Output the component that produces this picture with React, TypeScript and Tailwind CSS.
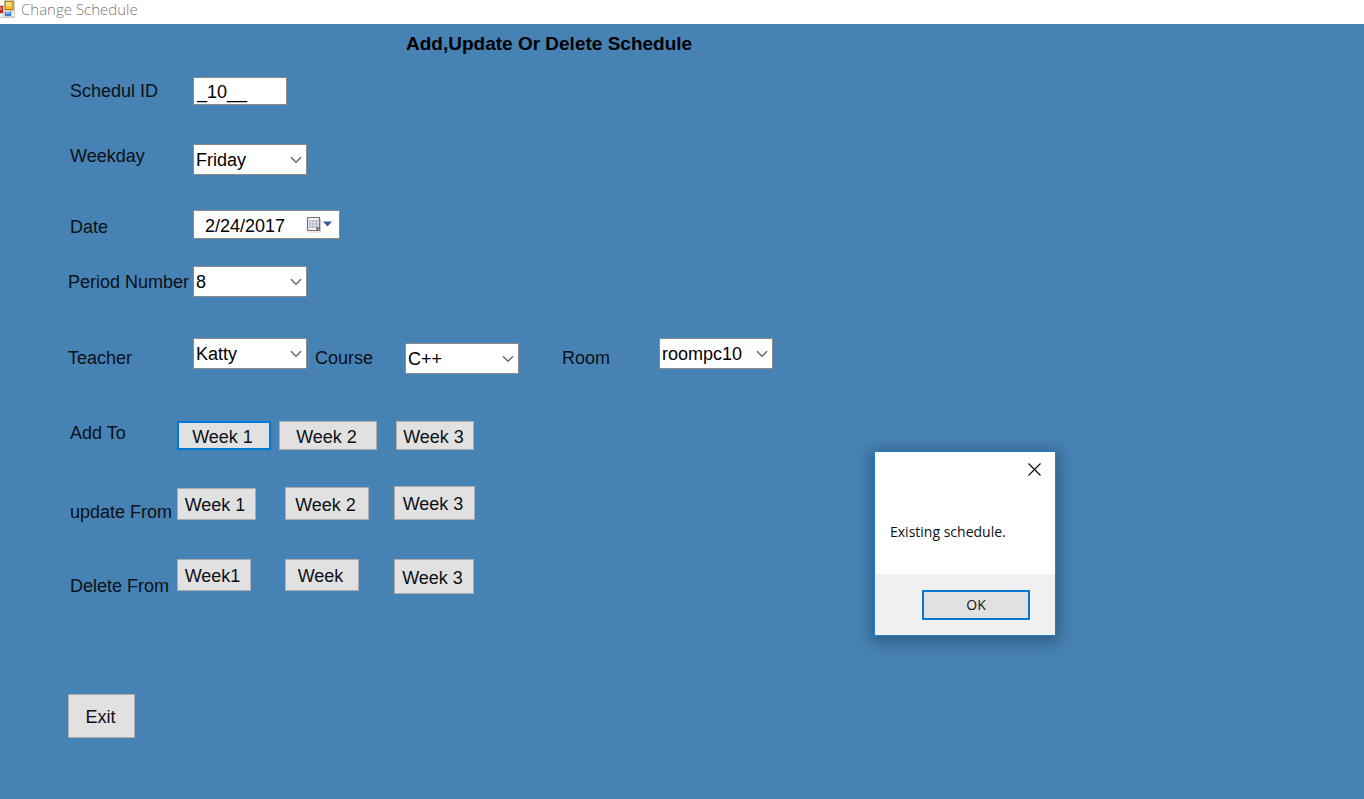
import type { ReactNode } from "react";

type ComboProps = { id: string; options: string[]; className?: string };

function Combo({ id, options, className = "" }: ComboProps) {
  return (
    <div className={`relative h-[31px] w-[114px] shrink-0 ${className}`}>
      <select
        id={id}
        defaultValue={options[0]}
        className="block h-full w-full appearance-none border border-[#8a8a8a] bg-white pl-[2px] text-[18px] leading-6 text-black outline-none"
      >
        {options.map((o) => (
          <option key={o}>{o}</option>
        ))}
      </select>
      <svg
        viewBox="0 0 12 8"
        className="pointer-events-none absolute top-3 right-[5px] h-2 w-3"
        fill="none"
        stroke="#6a6a6a"
        strokeWidth="1.5"
      >
        <path d="M1 1.2 L6 6.2 L11 1.2" />
      </svg>
    </div>
  );
}

function FieldLabel({ htmlFor, className, children }: { htmlFor: string; className: string; children: ReactNode }) {
  return (
    <label htmlFor={htmlFor} className={`shrink-0 whitespace-nowrap ${className}`}>
      {children}
    </label>
  );
}

function WeekButton({ label, className, primary = false }: { label: string; className: string; primary?: boolean }) {
  return (
    <button
      type="button"
      className={`shrink-0 bg-[#e1e1e1] pt-0.5 pr-[3px] whitespace-nowrap ${
        primary ? "border-2 border-[#0078d7]" : "border border-[#adadad]"
      } ${className}`}
    >
      {label}
    </button>
  );
}

function AppIcon() {
  return (
    <svg viewBox="0 0 15 18" className="h-[18px] w-[15px] shrink-0" aria-hidden="true">
      <path d="M4 0h11v18H0V5h4z" fill="#d0d0d0" />
      <rect x="0" y="6" width="3" height="7" fill="#b3261e" />
      <rect x="0" y="7" width="2" height="3" fill="#e0736b" />
      <rect x="5" y="1.500" width="8" height="8" fill="#f5c033" stroke="#b07c10" />
      <rect x="6" y="2" width="5" height="4" fill="#fddd78" />
      <rect x="0" y="14" width="3" height="3" fill="#f2f2f2" />
      <rect x="5" y="12" width="6" height="4" fill="#3f78d8" />
      <rect x="6" y="12" width="4" height="2" fill="#7fb0f5" />
      <rect x="12" y="12" width="2" height="4" fill="#f2f2f2" />
    </svg>
  );
}

function CalendarIcon() {
  return (
    <svg viewBox="0 0 26 17" className="h-[17px] w-[26px]" aria-hidden="true">
      <path d="M2 16h12.500V3" fill="none" stroke="#d5d0d0" />
      <path d="M1.500 1.500h12v13h-12z" fill="#eef0f5" stroke="#7b7070" strokeWidth="1.200" />
      <rect x="3" y="4" width="9" height="8" fill="#b3bccb" />
      <path d="M3 6.500h9M3 9.500h9M5.500 4v8M8.500 4v8" stroke="#dde2ea" strokeWidth="0.800" />
      <path d="M10.500 15v-3.500h3.500z" fill="#5d5555" />
      <path d="M17 5.500h9l-4.500 5z" fill="#3b5a95" />
    </svg>
  );
}

function MessageDialog() {
  return (
    <div
      role="dialog"
      aria-label="Existing schedule."
      className="absolute top-[451px] left-[874px] flex w-[182px] flex-col border border-[#1a80d8] bg-white font-['Open_Sans',sans-serif] text-[14px] leading-5 shadow-[0_3px_14px_3px_rgba(0,0,0,0.3)]"
    >
      <button type="button" aria-label="Close" className="mt-[10px] mr-[13px] self-end p-px">
        <svg viewBox="0 0 13 13" className="size-[13px]" stroke="#000" strokeWidth="1.1">
          <path d="M0.500 0.500 L12.500 12.500 M12.500 0.500 L0.500 12.500" />
        </svg>
      </button>
      <p className="mt-[45px] mb-8 pl-[15px]">Existing schedule.</p>
      <div className="flex justify-end bg-[#f0f0f0] pt-4 pr-[25px] pb-[15px]">
        <button type="button" className="h-[30px] w-[108px] border-2 border-[#0078d7] bg-[#e1e1e1]">
          OK
        </button>
      </div>
    </div>
  );
}

export default function App() {
  return (
    <div className="relative flex min-h-screen flex-col bg-[#4682b4] font-['Liberation_Sans',sans-serif] text-[18px] leading-6 text-[#0b1116]">
      <header className="flex h-6 items-start bg-white">
        <AppIcon />
        <span className="pl-[6px] font-['Open_Sans',sans-serif] text-[15px] leading-[18px] font-light text-[#777]">
          Change Schedule
        </span>
      </header>

      <main className="flex flex-col pt-2 pl-[70px]">
        <h1 className="pl-[336px] text-[19px] leading-6 font-bold text-black">
          Add,Update Or Delete Schedule
        </h1>

        <div className="mt-[21px] flex items-center">
          <FieldLabel htmlFor="schedule-id" className="w-[123px]">Schedul ID</FieldLabel>
          <input
            id="schedule-id"
            defaultValue="_10__"
            className="h-7 w-[94px] border border-[#8a8a8a] bg-white pt-0.5 pl-[3px] text-black outline-none"
          />
        </div>

        <div className="mt-[39px] flex items-start">
          <FieldLabel htmlFor="weekday" className="w-[123px]">Weekday</FieldLabel>
          <Combo id="weekday" options={["Friday"]} />
        </div>

        <div className="mt-[35px] flex items-end">
          <FieldLabel htmlFor="date" className="w-[123px]">Date</FieldLabel>
          <div className="flex h-[29px] w-[147px] items-center border border-[#8a8a8a] bg-white pr-[7px]">
            <input
              id="date"
              defaultValue="2/24/2017"
              className="w-full min-w-0 flex-1 bg-transparent pt-0.5 pl-[11px] text-black outline-none"
            />
            <button type="button" aria-label="Open calendar" className="shrink-0">
              <CalendarIcon />
            </button>
          </div>
        </div>

        <div className="mt-[27px] -ml-0.5 flex items-center">
          <FieldLabel htmlFor="period" className="w-[125px]">Period Number</FieldLabel>
          <Combo id="period" options={["8"]} />
        </div>

        <div className="mt-[41px] -ml-0.5 flex h-9 items-start">
          <FieldLabel htmlFor="teacher" className="w-[125px] self-end leading-8">Teacher</FieldLabel>
          <Combo id="teacher" options={["Katty"]} />
          <FieldLabel htmlFor="course" className="w-[98px] self-end pl-2 leading-8">Course</FieldLabel>
          <Combo id="course" options={["C++"]} className="self-end" />
          <FieldLabel htmlFor="room" className="w-[140px] self-end pl-[43px] leading-8">Room</FieldLabel>
          <Combo id="room" options={["roompc10"]} />
        </div>

        <div role="group" aria-label="Add To" className="mt-[47px] flex items-start">
          <span className="w-[107px] shrink-0">Add To</span>
          <WeekButton label="Week 1" primary className="h-[29px] w-[94px]" />
          <WeekButton label="Week 2" className="ml-2 h-[29px] w-[98px]" />
          <WeekButton label="Week 3" className="ml-[19px] h-[29px] w-[78px]" />
        </div>

        <div role="group" aria-label="update From" className="mt-9 flex items-end">
          <span className="w-[107px] shrink-0 leading-4">update From</span>
          <WeekButton label="Week 1" className="h-8 w-[79px]" />
          <WeekButton label="Week 2" className="ml-[29px] h-[33px] w-[84px]" />
          <WeekButton label="Week 3" className="ml-[25px] h-[34px] w-[81px]" />
        </div>

        <div role="group" aria-label="Delete From" className="mt-[39px] flex items-start">
          <span className="w-[107px] shrink-0 self-end leading-4">Delete From</span>
          <WeekButton label="Week1" className="h-8 w-[74px]" />
          <WeekButton label="Week" className="ml-[34px] h-8 w-[74px]" />
          <WeekButton label="Week 3" className="ml-[35px] h-[35px] w-[80px]" />
        </div>

        <button type="button" className="mt-[100px] -ml-0.5 h-11 w-[67px] border border-[#adadad] bg-[#e1e1e1] pt-0.5 pr-0.5">
          Exit
        </button>
      </main>

      <MessageDialog />
    </div>
  );
}
